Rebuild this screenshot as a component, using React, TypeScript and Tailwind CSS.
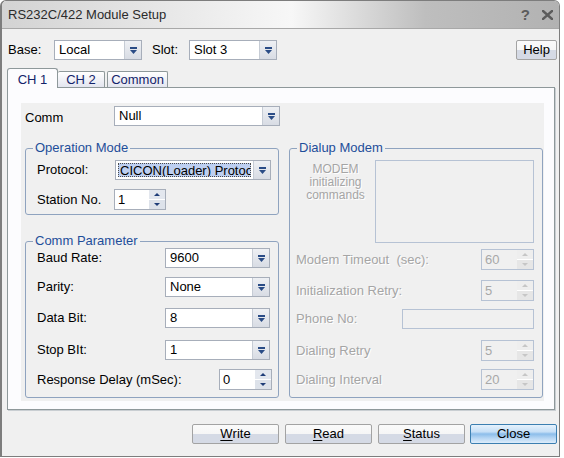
import clsx from 'clsx';

// Classic Windows XP-ish dialog: RS232C/422 module setup

function ComboArrow() {
  return (
    <svg width="7" height="7" viewBox="0 0 7 7">
      <rect x="0" y="0" width="7" height="2" fill="#2a4c86" />
      <polygon points="0,3 7,3 3.5,7" fill="#2a4c86" />
    </svg>
  );
}

function Combo({ value, className, selected }: { value: string; className?: string; selected?: boolean }) {
  return (
    <div className={clsx('flex h-[20px] min-w-0 border border-[#a7aeba] bg-white', className)}>
      {selected ? (
        <div className="m-[2px] min-w-0 flex-1 overflow-hidden whitespace-nowrap border border-dotted border-[#4a4a4a] bg-[#bdcff1] pl-[1px] leading-[14px]">
          {value}
        </div>
      ) : (
        <div className="flex min-w-0 flex-1 items-center overflow-hidden whitespace-nowrap pl-[4px]">{value}</div>
      )}
      <div className="flex w-[17px] shrink-0 items-center justify-center border-l border-[#c6ccd5] bg-[linear-gradient(to_bottom,#eef0f4,#d8dce4)]">
        <ComboArrow />
      </div>
    </div>
  );
}

function Spin({ value, disabled, className }: { value: string; disabled?: boolean; className?: string }) {
  const color = disabled ? '#c6c6c6' : '#1f3d78';
  return (
    <div
      className={clsx(
        'flex h-[21px] border',
        disabled ? 'border-[#b6c2d4] bg-[#f0f0f0] text-[#a8a8a8]' : 'border-[#a7aeba] bg-white',
        className,
      )}
    >
      <div className="flex flex-1 items-center pl-[3px]">{value}</div>
      <div className={clsx('flex w-[16px] flex-col', disabled ? 'bg-[#eeeeee]' : 'bg-[#e3e7ee]')}>
        <div className="flex flex-1 items-center justify-center">
          <svg width="6" height="3" viewBox="0 0 6 3">
            <polygon points="0,3 6,3 3,0" fill={color} />
          </svg>
        </div>
        <div className={clsx('flex flex-1 items-center justify-center border-t', disabled ? 'border-white bg-[#e6e6e6]' : 'border-white bg-[#dde2ea]')}>
          <svg width="6" height="3" viewBox="0 0 6 3">
            <polygon points="0,0 6,0 3,3" fill={color} />
          </svg>
        </div>
      </div>
    </div>
  );
}

function Btn({ children, primary, className }: { children: React.ReactNode; primary?: boolean; className?: string }) {
  return (
    <div
      className={clsx(
        'flex h-[20px] items-center justify-center rounded-[2px] border',
        primary
          ? 'border-[#3c7fb1] bg-[linear-gradient(to_bottom,#e6f2fd_0%,#c6dff6_38%,#8cbdea_50%,#b5d5f3_72%,#deedfb_100%)]'
          : 'border-[#a3a3a3] bg-[linear-gradient(to_bottom,#fafafa_0%,#f6f6f6_48%,#d5dae5_52%,#d5dae5_100%)]',
        className,
      )}
    >
      {children}
    </div>
  );
}

function Group({ title, className, children }: { title: string; className?: string; children: React.ReactNode }) {
  return (
    <fieldset className={clsx('min-w-0 rounded-[3px] border border-[#8fa3bf] p-0', className)}>
      <legend className="ml-[7px] px-[2px] leading-[14px] text-[#1e4e9a]">{title}</legend>
      {children}
    </fieldset>
  );
}

const dim = 'text-[#a5a5a5] [text-shadow:1px_1px_0_#ffffff]';

export default function App() {
  return (
    <div className="h-[458px] w-[564px] bg-white font-['Liberation_Sans',Arial,sans-serif] text-[13px] text-black">
      <div className="flex h-[457px] w-[560px] flex-col overflow-hidden rounded-t-[6px] border border-l-2 border-[#7d7d7d] bg-[#f0f0f0]">
        {/* title bar */}
        <div className="flex h-[28px] shrink-0 items-center border-b border-[#a8a8a8] bg-[linear-gradient(to_right,#d3d3d3_0%,#f7f7f7_52%,#bebebe_76%,#b2b2b2_100%)] pl-[6px] pr-[6px]">
          <span className="text-[#2b2b2b]">RS232C/422 Module Setup</span>
          <div className="ml-auto flex items-center gap-[12px]">
            <span className="text-[15px] font-bold leading-none text-[#5c5c5c]">?</span>
            <svg width="11" height="10" viewBox="0 0 11 10">
              <path d="M1 1 L10 9 M10 1 L1 9" stroke="#5c5c5c" strokeWidth="2.4" strokeLinecap="square" />
            </svg>
          </div>
        </div>

        <div className="flex flex-1 flex-col pl-[5px] pr-[2px] pt-[11px]">
          {/* base / slot row */}
          <div className="flex h-[20px] items-center">
            <span className="w-[47px] pl-[1px]">Base:</span>
            <Combo value="Local" className="w-[88px]" />
            <span className="ml-[10px] w-[37px]">Slot:</span>
            <Combo value="Slot 3" className="w-[88px]" />
            <Btn className="ml-auto w-[41px]">Help</Btn>
          </div>

          {/* tabs */}
          <div className="mt-[8px] flex h-[19px] items-end text-[#13236a]">
            <div className="relative z-10 -mb-px flex h-[20px] w-[51px] justify-center rounded-t-[3px] border border-b-0 border-[#8e989a] bg-[#fcfcfe] pt-[1px]">
              CH 1
            </div>
            <div className="flex h-[16px] w-[47px] items-center justify-center rounded-t-[2px] border border-b-0 border-l-0 border-[#8e989a] bg-[linear-gradient(to_bottom,#ffffff,#e3e5ef)]">
              CH 2
            </div>
            <div className="ml-[2px] flex h-[16px] w-[61px] items-center justify-center rounded-t-[2px] border border-b-0 border-[#8e989a] bg-[linear-gradient(to_bottom,#ffffff,#e3e5ef)]">
              Common
            </div>
          </div>

          {/* tab panel */}
          <div className="mr-[2px] flex flex-col border border-[#8e989a] bg-[#fcfcfe] pb-[8px] pl-[13px] pr-[10px] pt-[15px] shadow-[1px_1px_0_#c9ced2]">
            <div className="flex h-[298px] flex-col bg-[#f0f0f0] pl-[4px] pr-[1px] pt-[3px]">
              <div className="flex h-[20px] items-start">
                <span className="w-[89px] pt-[4px] leading-[15px]">Comm</span>
                <Combo value="Null" className="w-[166px]" />
              </div>

              <div className="mt-[15px] flex">
                {/* left column */}
                <div className="flex w-[254px] shrink-0 flex-col">
                  <Group title="Operation Mode">
                    <div className="flex flex-col pb-[4px] pl-[11px] pr-[7px] pt-[5px]">
                      <div className="flex h-[20px] items-center">
                        <span className="w-[78px] shrink-0">Protocol:</span>
                        <Combo value="CICON(Loader) Protocol" selected className="flex-1" />
                      </div>
                      <div className="mt-[9px] flex h-[21px] items-center">
                        <span className="w-[77px]">Station No.</span>
                        <Spin value="1" className="w-[52px]" />
                      </div>
                    </div>
                  </Group>

                  <Group title="Comm Parameter" className="mt-[19px]">
                    <div className="flex flex-col pb-[7px] pl-[11px] pr-[8px]">
                      <div className="flex h-[20px] items-center">
                        <span className="flex-1">Baud Rate:</span>
                        <Combo value="9600" className="w-[105px]" />
                      </div>
                      <div className="mt-[9px] flex h-[20px] items-center">
                        <span className="flex-1">Parity:</span>
                        <Combo value="None" className="w-[105px]" />
                      </div>
                      <div className="mt-[11px] flex h-[20px] items-center">
                        <span className="flex-1">Data Bit:</span>
                        <Combo value="8" className="w-[105px]" />
                      </div>
                      <div className="mt-[12px] flex h-[20px] items-center">
                        <span className="flex-1">Stop BIt:</span>
                        <Combo value="1" className="w-[105px]" />
                      </div>
                      <div className="mt-[9px] flex h-[21px] items-center">
                        <span className="flex-1">Response Delay (mSec):</span>
                        <Spin value="0" className="-mr-[2px] w-[53px]" />
                      </div>
                    </div>
                  </Group>
                </div>

                {/* right column */}
                <Group title="Dialup Modem" className="ml-[10px] w-[254px] shrink-0">
                  <div className="flex flex-col pb-[6px] pl-[6px] pr-[8px] pt-[5px]">
                    <div className="flex h-[83px]">
                      <div className={clsx('w-[79px] pt-[3px] text-center text-[12px] leading-[13px]', dim)}>
                        MODEM
                        <br />
                        initializing
                        <br />
                        commands
                      </div>
                      <div className="flex-1 border border-[#b6c2d4]" />
                    </div>
                    <div className="mt-[6px] flex h-[21px] items-center">
                      <span className={clsx('flex-1', dim)}>Modem Timeout{'\u00a0'} (sec):</span>
                      <Spin value="60" disabled className="w-[53px]" />
                    </div>
                    <div className="mt-[10px] flex h-[21px] items-center">
                      <span className={clsx('flex-1', dim)}>Initialization Retry:</span>
                      <Spin value="5" disabled className="w-[53px]" />
                    </div>
                    <div className="mt-[8px] flex h-[20px] items-center">
                      <span className={clsx('flex-1', dim)}>Phone No:</span>
                      <div className="h-[20px] w-[132px] border border-[#b6c2d4]" />
                    </div>
                    <div className="mt-[11px] flex h-[21px] items-center">
                      <span className={clsx('flex-1', dim)}>Dialing Retry</span>
                      <Spin value="5" disabled className="w-[53px]" />
                    </div>
                    <div className="mt-[8px] flex h-[21px] items-center">
                      <span className={clsx('flex-1', dim)}>Dialing Interval</span>
                      <Spin value="20" disabled className="w-[53px]" />
                    </div>
                  </div>
                </Group>
              </div>
            </div>
          </div>

          {/* bottom buttons */}
          <div className="mt-[14px] flex justify-end">
            <Btn className="w-[87px]">
              <span className="underline underline-offset-2">W</span>rite
            </Btn>
            <Btn className="ml-[6px] w-[87px]">
              <span className="underline underline-offset-2">R</span>ead
            </Btn>
            <Btn className="ml-[6px] w-[87px]">
              <span className="underline underline-offset-2">S</span>tatus
            </Btn>
            <Btn primary className="ml-[5px] w-[87px]">
              Close
            </Btn>
          </div>
        </div>
      </div>
    </div>
  );
}
